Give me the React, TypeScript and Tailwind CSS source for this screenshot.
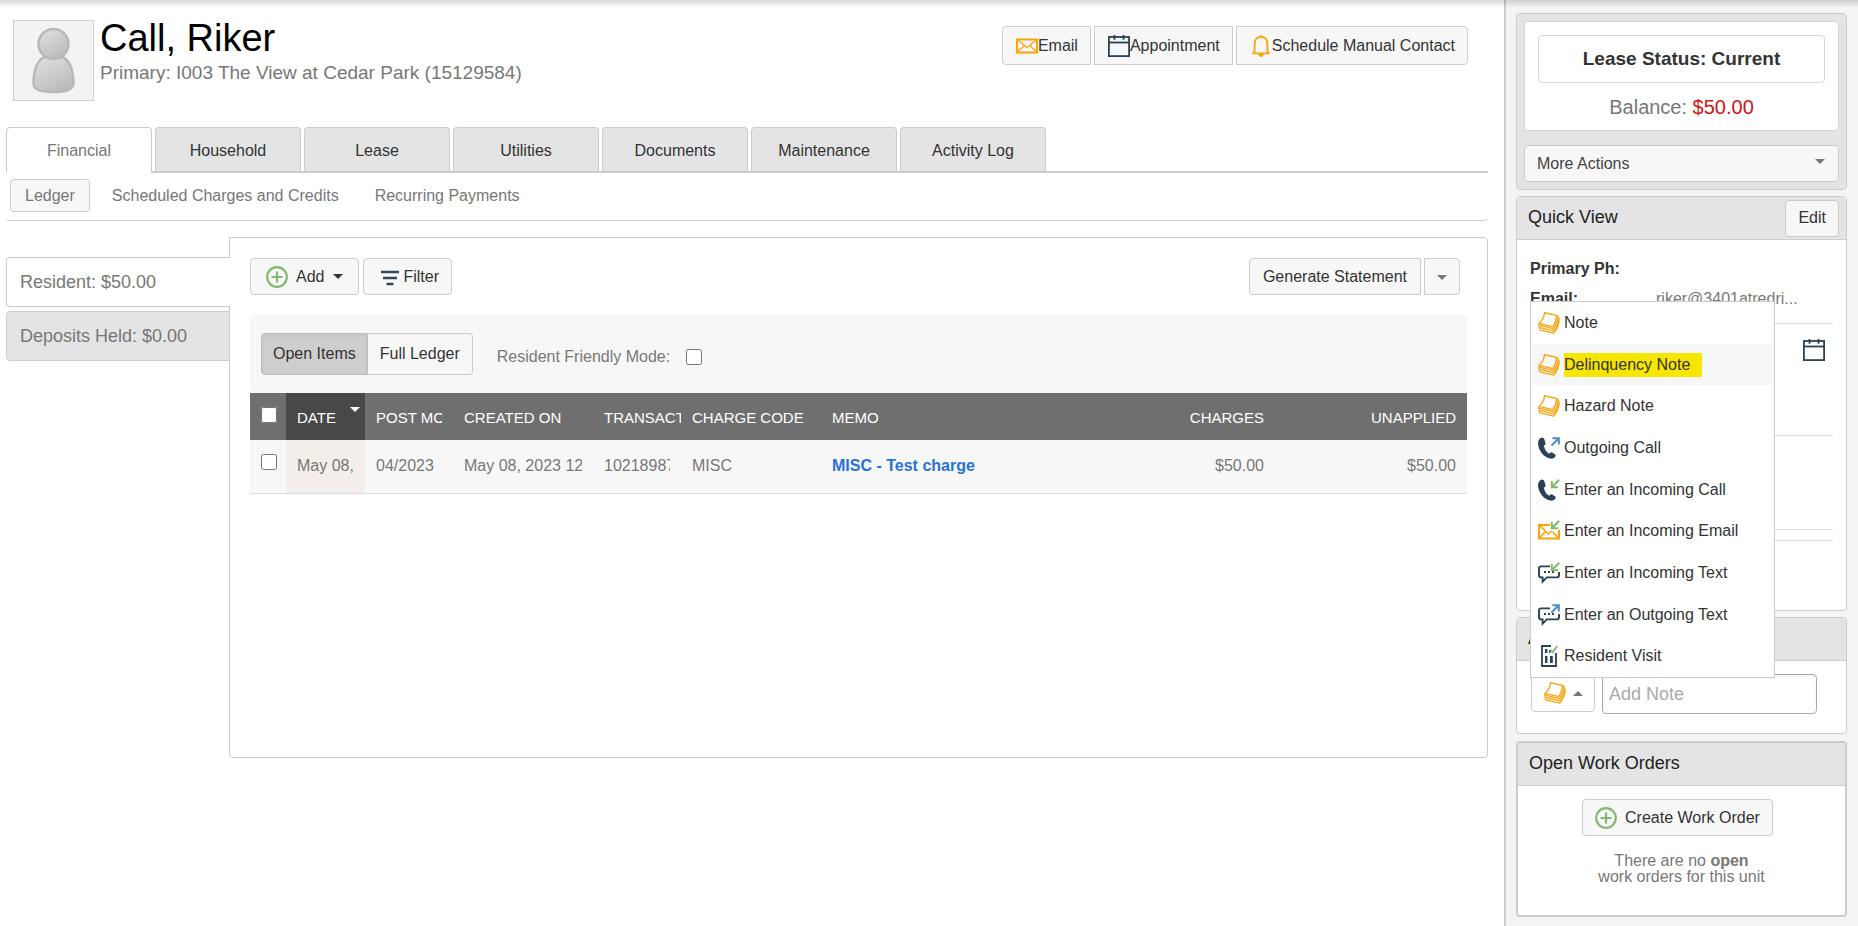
import React from 'react'
import { clsx } from 'clsx'

const tabs = ['Financial', 'Household', 'Lease', 'Utilities', 'Documents', 'Maintenance', 'Activity Log']

const btn = 'flex items-center border border-[#ccc] bg-[#f7f7f7] text-[#333] whitespace-nowrap'

function NoteIcon() {
    return (
        <svg width="22" height="22" viewBox="0 0 22 22" fill="none" stroke="#f9a50a" strokeWidth="1.2" strokeLinejoin="round">
            <path d="M6.5 0.8 L18.6 3.4 C18.4 7 17.4 11 14.8 14.6 L1 11.4 C4.4 8.4 6.2 5 6.500 0.8 Z" strokeWidth="1.4" />
            <path d="M18.6 3.4 L20.2 4.4 C20 9 18.400 13 15.4 16.6 L0.8 13.2 L1 11.4" />
            <path d="M20.4 6 L21.2 6.600 C20.6 11.4 18.8 15.400 15.6 18.8 L1.2 15.4 L0.8 13.6" />
            <path d="M21.2 9 C20.6 13.6 18.8 17.6 15.8 21.2 L1.8 17.8 L1.2 15.8" />
        </svg>
    )
}

function MailIcon() {
    return (
        <svg width="22" height="22" viewBox="0 0 22 22" fill="none" stroke="#f9a50a" strokeWidth="2">
            <rect x="1" y="4.5" width="20" height="13" />
            <path d="M1.500 5 L11 12.4 L20.5 5 M1.500 17 L8 10.600 M20.500 17 L14 10.6" strokeWidth="1.3" />
        </svg>
    )
}

function CalendarIcon() {
    return (
        <svg width="22" height="22" viewBox="0 0 22 22" fill="none" stroke="#2a4158" strokeWidth="1.8">
            <rect x="0.9" y="2" width="20.2" height="19.1" />
            <path d="M0.9 7.500 H21.1" />
            <path d="M6.5 0 V4.8 M15.5 0 V4.8" />
        </svg>
    )
}

function BellIcon() {
    return (
        <svg width="22" height="22" viewBox="0 0 22 22" fill="none" stroke="#f9a50a" strokeWidth="1.8">
            <path d="M4.6 16 V9 C4.6 4.6 7 1.8 11 1.8 C15 1.8 17.4 4.6 17.4 9 V16 L19 18.400 H3 Z" strokeLinejoin="round" />
            <path d="M9 19.5 H13 L12 21.2 H10 Z M10 0.8 H12" fill="#f9a50a" strokeWidth="1.2" />
        </svg>
    )
}

function PlusIcon() {
    return (
        <svg width="22" height="22" viewBox="0 0 22 22" fill="none" stroke="#84b870" strokeWidth="2.2">
            <circle cx="11" cy="11" r="9.8" />
            <path d="M11 5.5 V16.5 M5.5 11 H16.5" />
        </svg>
    )
}

function FilterIcon() {
    return (
        <svg width="18" height="16" viewBox="0 0 18 16" stroke="#34495e" strokeWidth="2.6" className="mt-[2px]">
            <path d="M0 2 H18 M2 8 H16 M5.5 14 H12.5" />
        </svg>
    )
}

function Arrow({ out }: { out?: boolean }) {
    return out ? (
        <path d="M13.4 8.6 L21 1 M14.4 1.2 H20.8 V7.6" stroke="#4a8bd0" strokeWidth="2" fill="none" />
    ) : (
        <path d="M21.2 0.8 L14 8 M13.8 2 V8.2 H20" stroke="#84b86a" strokeWidth="2" fill="none" />
    )
}

function CallIcon({ out }: { out?: boolean }) {
    return (
        <svg width="22" height="22" viewBox="0 0 22 22">
            <path d="M3.6 0.6 C0.8 1.8 -0.2 4.4 0.1 7.4 C1 14.2 6 20.2 12.4 21.6 C14.6 22 16.600 21 17.600 19.2 L17.6 17.8 L13.8 15.2 L12.6 15.4 L11.2 16.8 C8.6 15.600 6.600 12.4 5.8 8.8 L7.2 7.8 L7.6 6.600 L6 1.2 Z" fill="#2a4158" />
            <Arrow out={out} />
        </svg>
    )
}

function IncomingMailIcon() {
    return (
        <svg width="22" height="22" viewBox="0 0 22 22" fill="none">
            <path d="M12 5 H1 V18.500 H21 V10" stroke="#f9a50a" strokeWidth="2" />
            <path d="M1.500 5.4 L10.4 14 L13.6 11 M1.500 18 L7.4 11.600 M20.500 18 L14.600 11.8" stroke="#f9a50a" strokeWidth="1.6" />
            <Arrow />
        </svg>
    )
}

function TextIcon({ out }: { out?: boolean }) {
    return (
        <svg width="22" height="22" viewBox="0 0 22 22" fill="none">
            <path d="M12 4.4 H3.2 Q1 4.4 1 6.6 V13 Q1 15.400 3.2 15.4 H4.6 V19.6 L8.8 15.4 H18.8 Q21 15.4 21 13 V10" stroke="#2a4158" strokeWidth="1.9" />
            <path d="M6 9 h2 v2 h-2z M10 9 h2 v2 h-2z M14 9 h2 v2 h-2z" fill="#2a4158" />
            <Arrow out={out} />
        </svg>
    )
}

function VisitIcon() {
    return (
        <svg width="22" height="22" viewBox="0 0 22 22" fill="none">
            <path d="M13 1 H4 V21 H18 V8" stroke="#2a4158" strokeWidth="1.8" />
            <path d="M7 4 h2.4 v4 h-2.4z M7 11 h2.4 v7 h-2.4z M12 11 h2.8 v7 h-2.8z M11 5 h1.6 v3 h-1.6z" fill="#2a4158" />
            <path d="M12.4 4.6 L14.6 7 L19.4 1" stroke="#84b86a" strokeWidth="1.8" />
        </svg>
    )
}

function Caret({ up, className }: { up?: boolean; className?: string }) {
    return (
        <svg width="10" height="5" viewBox="0 0 10 5" className={className} fill="currentColor">
            <path d={up ? 'M0 5 L5 0 L10 5 Z' : 'M0 0 L5 5 L10 0 Z'} />
        </svg>
    )
}

function Avatar() {
    return (
        <svg width="81" height="81" viewBox="0 0 81 81" className="shrink-0">
            <defs>
                <linearGradient id="bodyFill" x1="0" y1="0" x2="0.6" y2="1">
                    <stop offset="0" stopColor="#e2e2e2" />
                    <stop offset="1" stopColor="#bcbcbc" />
                </linearGradient>
            </defs>
            <rect x="0.5" y="0.5" width="80" height="80" fill="#f3f3f3" stroke="#d0d0d0" />
            <path d="M31 37 C24 41 20.500 50 20.5 64 C20.5 70 30 72 40.5 72 C51 72 60.500 70 60.5 64 C60.500 50 57 41 50 37 Z" fill="url(#bodyFill)" stroke="#b8b8b8" strokeWidth="2.4" />
            <ellipse cx="40.5" cy="24" rx="15" ry="15" fill="url(#bodyFill)" stroke="#b8b8b8" strokeWidth="2.4" />
        </svg>
    )
}

const menuItems = [
    { label: 'Note', icon: <NoteIcon /> },
    { label: 'Delinquency Note', icon: <NoteIcon />, active: true },
    { label: 'Hazard Note', icon: <NoteIcon /> },
    { label: 'Outgoing Call', icon: <CallIcon out /> },
    { label: 'Enter an Incoming Call', icon: <CallIcon /> },
    { label: 'Enter an Incoming Email', icon: <IncomingMailIcon /> },
    { label: 'Enter an Incoming Text', icon: <TextIcon /> },
    { label: 'Enter an Outgoing Text', icon: <TextIcon out /> },
    { label: 'Resident Visit', icon: <VisitIcon /> },
]

function Header() {
    return (
        <header className="flex items-start pl-[7px] pr-5">
            <Avatar />
            <div className="flex-1 pl-[6px]">
                <h1 className="text-[38px] leading-9 text-black">Call, Riker</h1>
                <p className="text-[19px] leading-[34px] text-[#777]">Primary: I003 The View at Cedar Park (15129584)</p>
            </div>
            <div className="flex gap-[3px] pt-[6px]">
                <button className={clsx(btn, 'h-[39px] rounded-l pl-[13px] pr-3')}><MailIcon />Email</button>
                <button className={clsx(btn, 'h-[39px] pl-[13px] pr-3')}><CalendarIcon />Appointment</button>
                <button className={clsx(btn, 'h-[39px] rounded-r pl-[13px] pr-3')}><BellIcon />Schedule Manual Contact</button>
            </div>
        </header>
    )
}

function Tabs() {
    return (
        <nav className="mt-[26px]">
            <div className="flex gap-[3px] border-b-2 border-[#ccc]">
                {tabs.map((tab, i) => (
                    <a
                        key={tab}
                        href="#"
                        className={clsx(
                            'flex w-[146px] items-center justify-center rounded-t border border-b-0 border-[#ccc]',
                            i === 0 ? '-mb-[2px] h-[46px] bg-white text-[#777]' : 'h-11 bg-[#e4e4e4] pt-[2px] text-[#333]'
                        )}
                    >
                        {tab}
                    </a>
                ))}
            </div>
            <div className="flex items-center rounded-b border-b border-[#ccc] pb-2 pl-1 pt-[6px] text-[#777]">
                <a href="#" className="flex h-[33px] items-center rounded border border-[#ccc] bg-[#f7f7f7] px-[14px]">Ledger</a>
                <a href="#" className="ml-[22px]">Scheduled Charges and Credits</a>
                <a href="#" className="ml-9">Recurring Payments</a>
            </div>
        </nav>
    )
}

function LedgerTable() {
    const th = 'overflow-hidden whitespace-nowrap px-[11px] pt-1 text-left font-normal'
    const td = 'overflow-hidden whitespace-nowrap px-[11px]'
    return (
        <table className="w-full table-fixed border-collapse">
            <colgroup>
                <col className="w-9" />
                <col className="w-[79px]" />
                <col className="w-[88px]" />
                <col className="w-[140px]" />
                <col className="w-[88px]" />
                <col className="w-[140px]" />
                <col />
                <col className="w-48" />
                <col className="w-48" />
            </colgroup>
            <thead>
                <tr className="h-[47px] bg-[#6f6f6f] text-[15px] text-white">
                    <th className="px-[11px] pb-1"><input type="checkbox" aria-label="Select all" className="block h-4 w-4" /></th>
                    <th className="bg-[#484848] px-[11px] pt-1 text-left font-normal">
                        <div className="flex justify-between">DATE<Caret className="-mr-[6px]" /></div>
                    </th>
                    <th className={th}><div className="overflow-hidden">POST MO</div></th>
                    <th className={th}>CREATED ON</th>
                    <th className="overflow-hidden whitespace-nowrap pl-[11px] pt-1 text-left font-normal"><div className="overflow-hidden">TRANSACT</div></th>
                    <th className={th}>CHARGE CODE</th>
                    <th className={th}>MEMO</th>
                    <th className="px-[11px] pt-1 text-right font-normal">CHARGES</th>
                    <th className="px-[11px] pt-1 text-right font-normal">UNAPPLIED</th>
                </tr>
            </thead>
            <tbody>
                <tr className="h-[53px] border-b border-[#ddd] bg-[#f7f7f7] text-[#777]">
                    <td className="px-[11px] pb-2"><input type="checkbox" aria-label="Select May 08 charge" className="block h-4 w-4" /></td>
                    <td className="bg-[#f4eeeb] px-[11px]"><div className="overflow-hidden whitespace-nowrap">May 08,</div></td>
                    <td className={td}>04/2023</td>
                    <td className={td}><div className="overflow-hidden">May 08, 2023 12</div></td>
                    <td className={td}><div className="overflow-hidden">10218987</div></td>
                    <td className={td}>MISC</td>
                    <td className={td}><a href="#" className="font-bold text-[#2a72d4]">MISC - Test charge</a></td>
                    <td className="px-[11px] text-right">$50.00</td>
                    <td className="px-[11px] text-right">$50.00</td>
                </tr>
            </tbody>
        </table>
    )
}

function Ledger() {
    return (
        <div className="mt-4 flex items-start">
            <div className="z-10 -mr-px mt-5 flex w-56 shrink-0 flex-col gap-1 text-[18px] text-[#777]">
                <a href="#" className="flex h-[50px] items-center rounded-l border border-r-0 border-[#ccc] bg-white pl-[13px]">Resident: $50.00</a>
                <a href="#" className="flex h-[50px] items-center rounded-l border border-[#ccc] bg-[#e4e4e4] pl-[13px]">Deposits Held: $0.00</a>
            </div>
            <section className="min-h-[521px] min-w-0 flex-1 rounded-r rounded-bl border border-[#ccc] bg-white p-5">
                <div className="flex justify-between pr-[7px]">
                    <div className="flex gap-1">
                        <button className={clsx(btn, 'h-[37px] rounded px-[15px]')}>
                            <PlusIcon /><span className="ml-2">Add</span><Caret className="ml-[9px]" />
                        </button>
                        <button className={clsx(btn, 'h-[37px] rounded pl-[17px] pr-3')}>
                            <FilterIcon /><span className="ml-1">Filter</span>
                        </button>
                    </div>
                    <div className="flex gap-[3px]">
                        <button className={clsx(btn, 'h-[37px] rounded-l px-[13px]')}>Generate Statement</button>
                        <button aria-label="Statement options" className="flex h-[37px] items-center rounded-r border border-[#ccc] bg-[#f7f7f7] px-3 pt-[2px] text-[#777]"><Caret /></button>
                    </div>
                </div>
                <div className="mt-5 flex h-[78px] items-center rounded bg-[#f7f7f7] pl-[11px]">
                    <div className="flex">
                        <button className="h-[42px] rounded-l border border-[#bbb] bg-[#cecece] px-[11px] text-[#333] shadow-inner">Open Items</button>
                        <button className="h-[42px] rounded-r border border-l-0 border-[#ccc] bg-[#f7f7f7] px-3 text-[#333]">Full Ledger</button>
                    </div>
                    <div className="ml-6 flex items-center gap-4 pt-[5px]">
                        <label htmlFor="friendly" className="text-[#777]">Resident Friendly Mode:</label>
                        <input id="friendly" type="checkbox" className="h-4 w-4" />
                    </div>
                </div>
                <LedgerTable />
            </section>
        </div>
    )
}

function NoteMenu() {
    return (
        <div className="absolute -left-px bottom-9 z-20 flex h-[377px] w-[245px] flex-col border border-[#ccc] bg-white">
            {menuItems.map((item) => (
                <button key={item.label} className={clsx('flex flex-1 items-center gap-1 pl-[7px] text-[#333]', item.active && 'bg-[#f7f7f7]')}>
                    {item.icon}
                    <span className={clsx('leading-6', item.active && 'bg-[#f7e600] pr-3')}>{item.label}</span>
                </button>
            ))}
        </div>
    )
}

function Sidebar() {
    return (
        <aside className="flex w-[354px] shrink-0 flex-col gap-[6px] border-l-2 border-[#ccc] bg-[#f4f4f4] pb-[9px] pl-[10px] pr-[11px] pt-[13px]">
            <section className="rounded border border-[#ccc] bg-[#e4e4e4] p-[7px]">
                <div className="rounded border border-[#d6d6d6] bg-white p-[13px] pb-2 text-center">
                    <h2 className="rounded border border-[#d6d6d6] py-[9px] text-[19px] font-bold leading-7 text-[#333]">Lease Status: Current</h2>
                    <p className="mt-[10px] text-[20px] leading-[29px] text-[#777]">Balance: <span className="text-[#d0141a]">$50.00</span></p>
                </div>
                <div className="relative mt-[14px]">
                    <select aria-label="More Actions" className="h-[37px] w-full appearance-none rounded border border-[#ccc] bg-[#f7f7f7] px-3 text-[#444]">
                        <option>More Actions</option>
                    </select>
                    <Caret className="pointer-events-none absolute right-[14px] top-[14px] text-[#777]" />
                </div>
            </section>

            <section className="h-[415px] rounded border border-[#ccc] bg-white">
                <div className="flex h-[43px] items-center justify-between border-b border-[#ccc] bg-[#e4e4e4] pl-[11px] pr-[7px]">
                    <h2 className="pb-[2px] text-[18px] text-[#222]">Quick View</h2>
                    <button className={clsx(btn, 'h-[37px] rounded px-3')}>Edit</button>
                </div>
                <dl className="grid grid-cols-[126px_1fr] px-[13px] pt-[14px] leading-[30px]">
                    <dt className="font-bold text-[#333]">Primary Ph:</dt>
                    <dd />
                    <dt className="font-bold text-[#333]">Email:</dt>
                    <dd className="text-[#777]">riker@3401atredri...</dd>
                </dl>
                <div className="mx-[13px] mt-[9px] flex h-28 justify-end border-t border-[#ddd] pr-2 pt-[15px]">
                    <CalendarIcon />
                </div>
                <div className="mx-[13px] h-[94px] border-t border-[#ddd]" />
                <div className="mx-[13px] h-3 border-y border-[#ddd]" />
            </section>

            <section className="rounded border border-[#ccc] bg-white">
                <h2 className="h-[43px] border-b border-[#ccc] bg-[#e4e4e4] pl-[11px] text-[18px] leading-10 text-[#222]">Add Note</h2>
                <div className="flex gap-[7px] pb-[19px] pl-[14px] pt-[13px]">
                    <div className="relative">
                        <button aria-label="Note type" className="flex h-[38px] w-16 items-center gap-[7px] rounded border border-[#ccc] bg-white pl-3 text-[#777]">
                            <NoteIcon /><Caret up />
                        </button>
                        <NoteMenu />
                    </div>
                    <input type="text" aria-label="Add Note" placeholder="Add Note" className="h-10 w-[215px] rounded border border-[#aaa] bg-white px-[6px] text-[18px] shadow-inner placeholder:text-[#aaa]" />
                </div>
            </section>

            <section className="mt-px rounded border-2 border-[#ccc] bg-white">
                <h2 className="h-[43px] border-b border-[#ccc] bg-[#e4e4e4] pl-[11px] text-[18px] leading-10 text-[#222]">Open Work Orders</h2>
                <div className="flex flex-col items-center pb-[30px] pt-[13px]">
                    <button className={clsx(btn, 'mr-2 h-[37px] gap-2 rounded px-3')}><PlusIcon />Create Work Order</button>
                    <p className="mt-[17px] text-center leading-4 text-[#777]">There are no <b>open</b><br />work orders for this unit</p>
                </div>
            </section>
        </aside>
    )
}

export default function App() {
    return (
        <div className="relative flex min-h-screen bg-white font-['Liberation_Sans',Arial,sans-serif] text-base">
            <div className="pointer-events-none absolute inset-x-0 top-0 h-2 bg-linear-to-b from-black/15 to-transparent" />
            <main className="min-w-0 flex-1 pl-[6px] pr-4 pt-5">
                <Header />
                <Tabs />
                <Ledger />
            </main>
            <Sidebar />
        </div>
    )
}
